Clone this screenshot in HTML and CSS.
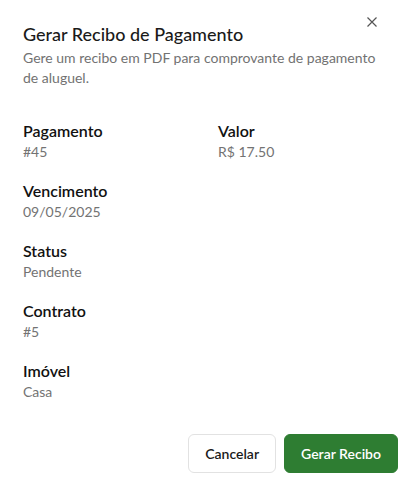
FILE: index.html
```html
<!DOCTYPE html>
<html lang="pt-BR">
<head>
<meta charset="utf-8">
<title>Gerar Recibo de Pagamento</title>
<link rel="stylesheet" href="styles.css">
</head>
<body>
<div class="dialog">
  <button class="close" aria-label="Fechar">
    <svg width="10" height="10" viewBox="0 0 10 10"><path d="M0.5 0.5 L9.5 9.5 M9.5 0.5 L0.5 9.5" stroke="#555" stroke-width="1.2" fill="none"/></svg>
  </button>
  <h2 class="title">Gerar Recibo de Pagamento</h2>
  <p class="desc">Gere um recibo em PDF para comprovante de pagamento de aluguel.</p>
  <div class="grid">
    <div class="field"><div class="label">Pagamento</div><div class="value">#45</div></div>
    <div class="field"><div class="label">Valor</div><div class="value">R$ 17.50</div></div>
    <div class="field full"><div class="label">Vencimento</div><div class="value">09/05/2025</div></div>
    <div class="field full"><div class="label">Status</div><div class="value">Pendente</div></div>
    <div class="field full"><div class="label">Contrato</div><div class="value">#5</div></div>
    <div class="field full"><div class="label">Imóvel</div><div class="value">Casa</div></div>
  </div>
  <div class="actions">
    <button class="btn btn-outline">Cancelar</button>
    <button class="btn btn-primary">Gerar Recibo</button>
  </div>
</div>
</body>
</html>
```
FILE: styles.css
```css
html, body {
  margin: 0;
  padding: 0;
  background: #fff;
}
body {
  font-family: Lato, "Noto Sans", sans-serif;
  color: #1a1a1a;
}
.dialog {
  position: relative;
  width: 418px;
  height: 498px;
  box-sizing: border-box;
  padding: 20px 20px 24px 23px;
}
.close {
  position: absolute;
  top: 17px;
  right: 41px;
  width: 10px;
  height: 10px;
  padding: 0;
  border: 0;
  background: none;
  display: flex;
}
.title {
  margin: 0;
  font-size: 18px;
  line-height: 28px;
  font-weight: 500;
  color: #1a1a1a;
}
.desc {
  margin: 0;
  font-size: 14px;
  line-height: 20px;
  color: #727272;
  padding-right: 10px;
}
.grid {
  margin-top: 32px;
  display: grid;
  grid-template-columns: 179px 1fr;
  column-gap: 16px;
  row-gap: 18px;
}
.field.full {
  grid-column: 1;
}
.label {
  font-size: 16px;
  line-height: 22px;
  font-weight: 600;
  color: #111;
}
.value {
  font-size: 14px;
  line-height: 20px;
  color: #737373;
}
.actions {
  margin-top: 32px;
  display: flex;
  justify-content: flex-end;
  gap: 8px;
}
.btn {
  height: 39px;
  padding: 0 16px;
  border-radius: 6px;
  font-family: inherit;
  font-size: 14px;
  font-weight: 600;
  cursor: pointer;
}
.btn-outline {
  background: #fff;
  border: 1px solid #e2e2e2;
  color: #1a1a1a;
}
.btn-primary {
  background: #2e7d32;
  border: 1px solid #2e7d32;
  color: #fff;
}
```
